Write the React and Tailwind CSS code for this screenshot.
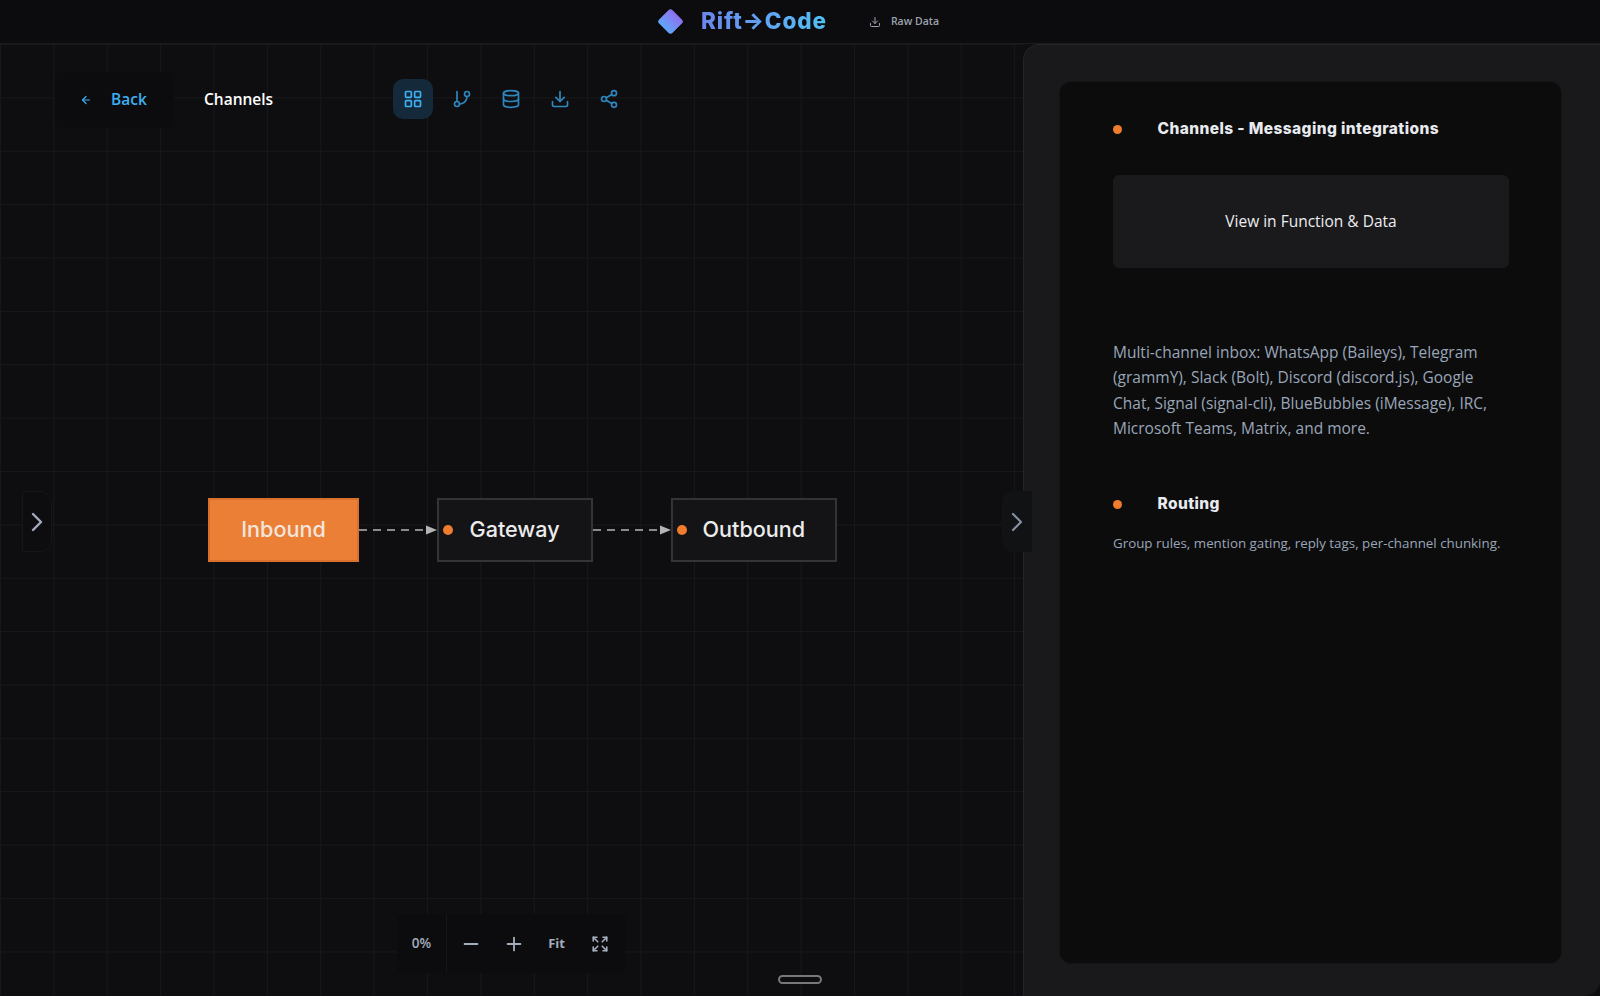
import { ChevronRight, Database, Download, Expand, GitBranch, LayoutGrid, Minus, Plus, Share2, ArrowLeft } from "lucide-react";

const tools = [
  { name: "grid", Icon: LayoutGrid, active: true },
  { name: "flow", Icon: GitBranch },
  { name: "data", Icon: Database },
  { name: "export", Icon: Download },
  { name: "share", Icon: Share2 },
];

const Edge = ({ className }) => (
  <svg className={className} width="80" height="12" viewBox="0 0 80 12" fill="none">
    <line x1="0" y1="6" x2="68" y2="6" stroke="#8b8b8b" strokeWidth="2" strokeDasharray="8 6" />
    <path d="M67 1.5 L78 6 L67 10.5 Z" fill="#b4b4b4" />
  </svg>
);

const Node = ({ label, className, dot, textClass }) => (
  <div className={`absolute top-[454px] h-[64px] flex items-center border-2 ${className}`}>
    {dot && <span className="w-[10px] h-[10px] rounded-full bg-[#f07c2e] ml-[3.5px]" />}
    <span className={`text-[21.6px] font-medium leading-none font-['Inter',sans-serif] ${textClass}`}>{label}</span>
  </div>
);

const App = () => {
  return (
    <div className="w-[1600px] h-[996px] overflow-hidden flex flex-col bg-[#0e0e11] font-['Open_Sans',sans-serif]">
      <header className="h-[44px] shrink-0 bg-[#0c0c0e] border-b border-[#1a1b1d] flex items-center pl-[658px]">
        <span className="w-[19px] h-[19px] ml-[3px] rotate-45 rounded-[3px] bg-gradient-to-b from-[#8b6ff0] to-[#5aa7f8]" />
        <span className="ml-[21px] text-[22.5px] font-extrabold leading-none tracking-[0.9px] font-['Inter',sans-serif] text-transparent bg-clip-text bg-gradient-to-r from-[#6a86ee] to-[#4fc0f5]">
          Rift→Code
        </span>
        <Download size={12} className="ml-[42px] text-[#9ca3af]" />
        <span className="ml-[10px] text-[10.5px] font-semibold text-[#9ca3af]">Raw Data</span>
      </header>

      <main className="flex-1 flex min-h-0">
        <section className="relative flex-1 bg-[#0e0e11] bg-[linear-gradient(to_right,#17181a_1px,transparent_1px),linear-gradient(to_bottom,#17181a_1px,transparent_1px)] bg-[size:53.38px_53.38px]">
          <div className="absolute left-[55px] top-[28px] w-[119px] h-[56px] rounded-lg bg-[#0c0c0e] flex items-center pl-[25px] text-[#3db0f2]">
            <ArrowLeft size={12} strokeWidth={2.4} />
            <span className="ml-[19px] text-[15.5px] font-semibold">Back</span>
          </div>
          <span className="absolute left-[204px] top-[43px] text-[15.5px] leading-[24px] font-semibold text-white">Channels</span>

          <div className="absolute left-[393px] top-[35px] flex items-center gap-[9px]">
            {tools.map(({ name, Icon, active }) => (
              <div
                key={name}
                className={`w-[40px] h-[40px] rounded-[10px] flex items-center justify-center ${active ? "bg-[#14293a] text-[#3db0f2]" : "text-[#2f86bf]"}`}
              >
                <Icon size={20} strokeWidth={2} />
              </div>
            ))}
          </div>

          <div className="absolute left-[22px] top-[447px] w-[30px] h-[61px] rounded-r-xl border border-[#151619] bg-[#0d0d10] flex items-center justify-center text-[#a3adbd]">
            <ChevronRight size={32} strokeWidth={1.8} className="shrink-0" />
          </div>
          <div className="absolute left-[1002px] top-[447px] z-10 w-[30px] h-[61px] rounded-l-xl bg-[#111214] flex items-center justify-center text-[#8791a3]">
            <ChevronRight size={32} strokeWidth={1.6} className="shrink-0" />
          </div>

          <Node label="Inbound" className="left-[208px] w-[151px] justify-center bg-[#ec7f36] border-[#d9702c]" textClass="text-[#f1e6dc]" />
          <Edge className="absolute left-[359px] top-[480px]" />
          <Node label="Gateway" dot className="left-[437px] w-[156px] bg-[#141416] border-[#333436]" textClass="text-[#ececec] ml-[17px]" />
          <Edge className="absolute left-[593px] top-[480px]" />
          <Node label="Outbound" dot className="left-[671px] w-[166px] bg-[#141416] border-[#333436]" textClass="text-[#ececec] ml-[16px]" />

          <div className="absolute left-[397px] top-[870px] w-[229px] h-[59px] rounded-md bg-[#0c0c0e] flex items-center text-[#a3adbd]">
            <div className="w-[50px] h-full border-r border-[#141518] flex items-center justify-center text-[13.5px] font-semibold">0%</div>
            <div className="flex-1 flex items-center pl-[2px]">
              <div className="w-[43px] flex justify-center"><Minus size={22} strokeWidth={2} /></div>
              <div className="w-[43px] flex justify-center"><Plus size={22} strokeWidth={2} /></div>
              <div className="w-[43px] flex justify-center text-[13px] font-bold">Fit</div>
              <div className="w-[43px] flex justify-center"><Expand size={18} strokeWidth={2.2} /></div>
            </div>
          </div>

          <div className="absolute left-[778px] top-[931px] w-[44px] h-[9px] rounded-full border-2 border-[#77787a] bg-[#0e0e11]" />
        </section>

        <aside className="w-[577px] shrink-0 rounded-tl-2xl rounded-br-2xl border-l border-t border-[#232427] bg-[#19191b] pl-[35px] pr-[38px] pt-[36px] pb-[32px] flex">
          <div className="flex-1 rounded-xl border border-[#141415] bg-[#0c0c0d] pl-[53px] pr-[52px] pt-[35px]">
            <div className="flex items-center h-[24px]">
              <span className="w-[9px] h-[9px] rounded-full bg-[#f07c2e]" />
              <h3 className="ml-[35.5px] text-[15.5px] font-extrabold leading-none tracking-[0.4px] text-[#e8eaee] font-['Inter',sans-serif]">Channels - Messaging integrations</h3>
            </div>
            <div className="mt-[34px] h-[93px] pt-[1px] rounded-md bg-[#1a1a1c] flex items-center justify-center text-[15.5px] font-medium text-[#eceef1]">
              View in Function &amp; Data
            </div>
            <p className="mt-[72px] text-[15.5px] leading-[25.3px] text-[#9aa6b8]">
              Multi-channel inbox: WhatsApp (Baileys), Telegram (grammY), Slack (Bolt), Discord (discord.js), Google Chat, Signal (signal-cli), BlueBubbles (iMessage), IRC, Microsoft Teams, Matrix, and more.
            </p>
            <div className="mt-[51px] flex items-center h-[24px]">
              <span className="w-[9px] h-[9px] rounded-full bg-[#f07c2e]" />
              <h3 className="ml-[35.5px] text-[15.5px] font-extrabold leading-none tracking-[0.4px] text-[#e8eaee] font-['Inter',sans-serif]">Routing</h3>
            </div>
            <p className="mt-[17px] text-[13.35px] leading-[20px] text-[#9aa6b8]">
              Group rules, mention gating, reply tags, per-channel chunking.
            </p>
          </div>
        </aside>
      </main>
    </div>
  );
};

export default App;
